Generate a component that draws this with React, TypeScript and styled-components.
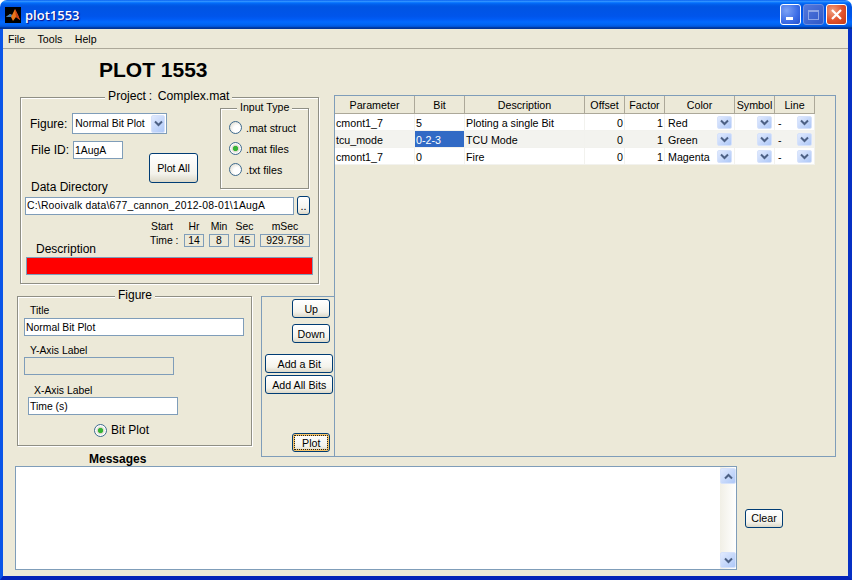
import React from "react";
import styled, { createGlobalStyle } from "styled-components";

const Global = createGlobalStyle`
  html, body { margin: 0; padding: 0; background: #fff; }
  body { font-family: "Liberation Sans", Arial, sans-serif; color: #000; }
  #root { width: 852px; height: 580px; overflow: hidden; }
  * { box-sizing: border-box; }
`;

const Face = "#ece9d8";
const FieldBorder = "#7f9db9";

const Window = styled.div`
  width: 852px;
  height: 580px;
  display: flex;
  flex-direction: column;
  font-size: 10.4px;
`;

const TitleBar = styled.div`
  height: 29px;
  flex: none;
  display: flex;
  align-items: center;
  padding: 0 5px 0 5px;
  border-radius: 7px 7px 0 0;
  background: linear-gradient(180deg, #0058ee 0%, #3593ff 4%, #288eff 6%, #127dff 8%, #036ffc 10%, #0262ee 14%, #0057e5 20%, #0054e3 24%, #0055eb 56%, #005bf5 66%, #026afe 76%, #0062ef 86%, #0052d6 92%, #0040ab 94%, #003092 100%);
`;

const TitleText = styled.span`
  margin-left: 4px;
  color: #fff;
  font-family: "Open Sans", sans-serif;
  font-size: 13px;
  font-weight: 600;
  text-shadow: 1px 1px 1px #0f1089;
`;

const Caption = styled.div`
  margin-left: auto;
  display: flex;
  gap: 2px;
`;

const CaptionButton = styled.div<{ $kind: "min" | "max" | "close" }>`
  width: 21px;
  height: 21px;
  border-radius: 3px;
  border: 1px solid ${(p) => (p.$kind === "max" ? "#6d8fe0" : "#fff")};
  display: flex;
  align-items: center;
  justify-content: center;
  background: ${(p) =>
    p.$kind === "close"
      ? "radial-gradient(circle at 30% 30%, #f0a080, #e0502a 55%, #c23a16)"
      : p.$kind === "max"
      ? "linear-gradient(135deg, #5478dc, #2e58c8)"
      : "radial-gradient(circle at 30% 30%, #7da2f5, #3b6ce6 60%, #2450cc)"};
`;

const Frame = styled.div`
  flex: 1;
  min-height: 0;
  display: flex;
  flex-direction: column;
  background: ${Face};
  border-left: 3px solid #0a55e8;
  border-right: 4px solid #0630c4;
  border-bottom: 4px solid #0323b8;
`;

const MenuBar = styled.div`
  height: 20px;
  flex: none;
  display: flex;
  align-items: center;
  padding-left: 5px;
  gap: 12.5px;
  border-bottom: 1px solid #aca899;
  font-size: 10.6px;
`;

const UpperArea = styled.div`
  display: flex;
  height: 408px;
  flex: none;
`;

const LeftColumn = styled.div`
  width: 331px;
  flex: none;
  display: flex;
  flex-direction: column;
`;

const Heading = styled.h1`
  margin: 0;
  height: 48px;
  padding: 9px 0 0 96px;
  font-size: 21px;
  line-height: 24px;
  font-weight: bold;
`;

const EtchedPanel = styled.div`
  position: relative;
  border: 1px solid #8f8f85;
  box-shadow: 1px 1px 0 #fff, inset 1px 1px 0 #fff;
`;

const Legend = styled.span<{ $left: number }>`
  position: absolute;
  top: -8px;
  left: ${(p) => p.$left}px;
  padding: 0 3px;
  background: ${Face};
  font-size: 12px;
  line-height: 13px;
  white-space: pre;
`;

const ProjectLegend = styled(Legend)`
  font-size: 12.2px;
  word-spacing: -0.6px;
`;

const ProjectPanel = styled(EtchedPanel)`
  margin-left: 17px;
  width: 299px;
  height: 187px;
  padding: 10px 0 0 4px;
  display: flex;
  flex-direction: column;
`;

const TopRow = styled.div`
  display: flex;
  align-items: flex-start;
`;

const TopLeft = styled.div`
  width: 195px;
  padding-left: 5px;
  display: flex;
  flex-direction: column;
`;

const FigureRow = styled.div`
  margin-top: 5px;
  display: flex;
  align-items: center;
  gap: 5px;
  height: 21px;
`;

const BigLabel = styled.span`
  font-size: 12px;
  line-height: 14px;
  white-space: pre;
`;

const Select = styled.div`
  width: 95px;
  height: 21px;
  background: #fff;
  border: 1px solid ${FieldBorder};
  display: flex;
  align-items: center;
  justify-content: space-between;
  padding: 0 1px 0 2px;
  font-size: 10.4px;
`;

const ArrowBox = styled.div<{ $w?: number; $h?: number }>`
  width: ${(p) => p.$w ?? 15}px;
  height: ${(p) => p.$h ?? 13}px;
  flex: none;
  border-radius: 2px;
  border: 1px solid #d6e2fb;
  background: linear-gradient(135deg, #e1eafe, #aec8f7);
  display: flex;
  align-items: center;
  justify-content: center;
`;

const CellArrow = styled(ArrowBox)`
  margin-top: -2px;
`;

const Chevron = ({ up = false }: { up?: boolean }) => (
  <svg width="9" height="7" viewBox="0 0 9 7">
    <polyline
      points={up ? "1,5.5 4.5,2 8,5.5" : "1,1.5 4.5,5 8,1.5"}
      fill="none"
      stroke="#4d6185"
      strokeWidth="2"
    />
  </svg>
);

const FileRow = styled.div`
  margin-top: 7px;
  display: flex;
  align-items: flex-start;
`;

const FileGroup = styled.div`
  display: flex;
  align-items: center;
  gap: 4px;
  margin-left: 1px;
`;

const Field = styled.div<{ $w: number; $h?: number; $disabled?: boolean }>`
  width: ${(p) => p.$w}px;
  height: ${(p) => p.$h ?? 18}px;
  flex: none;
  background: ${(p) => (p.$disabled ? Face : "#fff")};
  border: 1px solid ${FieldBorder};
  display: flex;
  align-items: center;
  padding-left: 1px;
  font-size: 10.4px;
  white-space: pre;
`;

const PathField = styled(Field)`
  letter-spacing: 0.2px;
`;

const Button = styled.div<{ $w: number; $h?: number; $focused?: boolean }>`
  width: ${(p) => p.$w}px;
  height: ${(p) => p.$h ?? 19}px;
  flex: none;
  display: flex;
  align-items: center;
  justify-content: center;
  border: 1px solid #003c74;
  border-radius: 3px;
  background: linear-gradient(180deg, #fff 0%, #f4f3ec 70%, #dcd8c8 100%);
  font-size: 10.7px;
  box-shadow: ${(p) => (p.$focused ? "inset 0 0 0 2px #f5c46a" : "none")};
  outline: ${(p) => (p.$focused ? "1px dotted #222" : "none")};
  outline-offset: ${(p) => (p.$focused ? "-3px" : "0")};
`;

const PlotAllButton = styled(Button)`
  margin: 12px 0 0 26px;
`;

const DataLabel = styled(BigLabel)`
  margin: -3px 0 0 1px;
`;

const InputTypeBox = styled(EtchedPanel)`
  width: 89px;
  height: 81px;
  padding-top: 12px;
  padding-left: 8px;
  display: flex;
  flex-direction: column;
  gap: 8px;
`;

const InputLegend = styled(Legend)`
  font-size: 10.6px;
`;

const RadioRow = styled.div`
  height: 13px;
  display: flex;
  align-items: center;
  gap: 4px;
  font-size: 10.7px;
`;

const RadioCircle = styled.span<{ $on?: boolean }>`
  width: 13px;
  height: 13px;
  flex: none;
  border-radius: 50%;
  border: 1px solid #3e6a8e;
  background: ${(p) =>
    p.$on
      ? "radial-gradient(circle, #36b336 0 2.2px, #dcd9cd 3px, #fff 5px)"
      : "radial-gradient(circle at 65% 65%, #fff 35%, #dcd9cd 90%)"};
`;

const PathRow = styled.div`
  margin-top: 2px;
  display: flex;
  align-items: center;
  gap: 3px;
`;

const InfoRow = styled.div`
  margin: 5px 0 0 11px;
  height: 36px;
  display: flex;
  justify-content: space-between;
  padding-right: 8px;
`;

const DescriptionLabel = styled(BigLabel)`
  align-self: flex-end;
`;

const TimeGrid = styled.div`
  display: grid;
  grid-template-columns: 34px 20px 20px 21px 50px;
  grid-template-rows: 14px 13px;
  column-gap: 5px;
  font-size: 10.4px;
`;

const TimeHead = styled.span`
  text-align: center;
  line-height: 14px;
`;

const TimeCaption = styled.span`
  padding-left: 5px;
  line-height: 13px;
  white-space: pre;
`;

const TimeValue = styled.div`
  border: 1px solid ${FieldBorder};
  text-align: center;
  line-height: 12px;
  font-size: 10.4px;
`;

const RedBar = styled.div`
  margin: 1px 0 0 1px;
  width: 287px;
  height: 18px;
  background: #ff0000;
  border: 1px solid ${FieldBorder};
`;

const LowerLeft = styled.div`
  margin-top: 12px;
  display: flex;
  align-items: flex-start;
`;

const FigurePanel = styled(EtchedPanel)`
  margin-left: 14px;
  width: 236px;
  height: 150px;
  padding: 8px 0 0 6px;
  display: flex;
  flex-direction: column;
`;

const FieldLabel = styled.span<{ $indent: number; $top: number; $bottom?: number }>`
  margin: ${(p) => p.$top}px 0 ${(p) => p.$bottom ?? 0}px ${(p) => p.$indent}px;
  font-size: 10.4px;
  line-height: 12px;
`;

const TitleField = styled(Field)<{ $indent?: number }>`
  margin-left: ${(p) => p.$indent ?? 0}px;
`;

const BitPlotRow = styled.div`
  margin: 8px 0 0 70px;
  display: flex;
  align-items: center;
  gap: 4px;
  font-size: 12px;
`;

const ButtonPanel = styled.div`
  margin-left: 9px;
  width: 73px;
  height: 161px;
  border: 1px solid ${FieldBorder};
  border-right: none;
  padding: 1px 0 0 3px;
  display: flex;
  flex-direction: column;
`;

const SmallButton = styled(Button)<{ $top: number }>`
  margin-top: ${(p) => p.$top}px;
  margin-left: 27px;
`;

const WideButton = styled(Button)<{ $top: number }>`
  margin-top: ${(p) => p.$top}px;
`;

const TablePanel = styled.div`
  margin-top: 46px;
  width: 502px;
  height: 362px;
  border: 1px solid ${FieldBorder};
  background: ${Face};
`;

const Table = styled.div`
  display: grid;
  grid-template-columns: 80px 50px 120px 40px 40px 70px 40px 40px;
  grid-template-rows: 18px;
  grid-auto-rows: 17px;
`;

const HeaderCell = styled.div`
  display: flex;
  align-items: center;
  justify-content: center;
  border-right: 1px solid #aca899;
  border-bottom: 1px solid #aca899;
  font-size: 10.7px;
`;

const Cell = styled.div<{ $shade?: boolean; $selected?: boolean; $kind?: "num" | "drop" | "dash" }>`
  display: flex;
  align-items: center;
  justify-content: ${(p) => (p.$kind === "num" ? "flex-end" : "space-between")};
  padding: 2px ${(p) => (p.$kind === "num" ? 1 : 2)}px 0 ${(p) => (p.$kind === "drop" ? 3 : p.$kind === "dash" ? 3 : 1)}px;
  border-right: 1px solid #f2f2ee;
  border-bottom: 1px solid #f2f2ee;
  background: ${(p) => (p.$selected ? "#316ac5" : p.$shade ? "#f3f3ef" : "#fff")};
  color: ${(p) => (p.$selected ? "#fff" : "#000")};
  font-size: 10.7px;
`;

const SymbolCell = styled(Cell)`
  justify-content: flex-end;
`;

const MessagesArea = styled.div`
  padding-left: 12px;
  display: flex;
  flex-direction: column;
`;

const MessagesLabel = styled.div`
  margin: -5px 0 0 74px;
  font-size: 12px;
  line-height: 14px;
  font-weight: bold;
`;

const MessagesRow = styled.div`
  display: flex;
  align-items: center;
  gap: 8px;
`;

const MessagesBox = styled.div`
  width: 722px;
  height: 104px;
  background: #fff;
  border: 1px solid ${FieldBorder};
  display: flex;
  justify-content: flex-end;
`;

const ScrollTrack = styled.div`
  width: 16px;
  height: 100%;
  padding: 1px 0;
  background: linear-gradient(90deg, #f1efe6, #fff);
  display: flex;
  flex-direction: column;
  justify-content: space-between;
`;

const MatlabIcon = () => (
  <svg width="16" height="16" viewBox="0 0 16 16">
    <rect width="16" height="16" fill="#000" />
    <path d="M1 10 L5 7 L7 8 L10 2 L13 8 L15 13 L11 10 L8 14 L6 10 Z" fill="#e8761a" />
    <path d="M1 10 L5 7 L7 8 L6 10 Z" fill="#3c7fb8" />
    <path d="M10 2 L13 8 L15 13 L11 10 Z" fill="#c8401a" />
  </svg>
);

const headers = ["Parameter", "Bit", "Description", "Offset", "Factor", "Color", "Symbol", "Line"];
const rows = [
  ["cmont1_7", "5", "Ploting a single Bit", "Red"],
  ["tcu_mode", "0-2-3", "TCU Mode", "Green"],
  ["cmont1_7", "0", "Fire", "Magenta"],
];

export default function App() {
  return (
    <Window>
      <Global />
      <TitleBar>
        <MatlabIcon />
        <TitleText>plot1553</TitleText>
        <Caption>
          <CaptionButton $kind="min">
            <svg width="13" height="13" viewBox="0 0 13 13">
              <rect x="2" y="9" width="7" height="3" fill="#fff" />
            </svg>
          </CaptionButton>
          <CaptionButton $kind="max">
            <svg width="13" height="13" viewBox="0 0 13 13">
              <rect x="1.5" y="2.5" width="10" height="9" fill="none" stroke="#8ea6e6" />
              <rect x="1" y="2" width="11" height="2" fill="#8ea6e6" />
            </svg>
          </CaptionButton>
          <CaptionButton $kind="close">
            <svg width="13" height="13" viewBox="0 0 13 13">
              <path d="M2 2 L11 11 M11 2 L2 11" stroke="#fff" strokeWidth="2.2" />
            </svg>
          </CaptionButton>
        </Caption>
      </TitleBar>
      <Frame>
        <MenuBar>
          <span>File</span>
          <span>Tools</span>
          <span>Help</span>
        </MenuBar>
        <UpperArea>
          <LeftColumn>
            <Heading>PLOT 1553</Heading>
            <ProjectPanel>
              <ProjectLegend $left={84}>Project :  Complex.mat</ProjectLegend>
              <TopRow>
                <TopLeft>
                  <FigureRow>
                    <BigLabel>Figure:</BigLabel>
                    <Select>
                      Normal Bit Plot
                      <ArrowBox $w={14} $h={18}>
                        <Chevron />
                      </ArrowBox>
                    </Select>
                  </FigureRow>
                  <FileRow>
                    <FileGroup>
                      <BigLabel>File ID:</BigLabel>
                      <Field $w={50}>1AugA</Field>
                    </FileGroup>
                    <PlotAllButton $w={49} $h={30}>Plot All</PlotAllButton>
                  </FileRow>
                  <DataLabel>Data Directory</DataLabel>
                </TopLeft>
                <InputTypeBox>
                  <InputLegend $left={16}>Input Type</InputLegend>
                  <RadioRow><RadioCircle />.mat struct</RadioRow>
                  <RadioRow><RadioCircle $on />.mat files</RadioRow>
                  <RadioRow><RadioCircle />.txt files</RadioRow>
                </InputTypeBox>
              </TopRow>
              <PathRow>
                <PathField $w={269}>C:\Rooivalk data\677_cannon_2012-08-01\1AugA</PathField>
                <Button $w={13}>..</Button>
              </PathRow>
              <InfoRow>
                <DescriptionLabel>Description</DescriptionLabel>
                <TimeGrid>
                  <TimeHead>Start</TimeHead>
                  <TimeHead>Hr</TimeHead>
                  <TimeHead>Min</TimeHead>
                  <TimeHead>Sec</TimeHead>
                  <TimeHead>mSec</TimeHead>
                  <TimeCaption>Time :</TimeCaption>
                  <TimeValue>14</TimeValue>
                  <TimeValue>8</TimeValue>
                  <TimeValue>45</TimeValue>
                  <TimeValue>929.758</TimeValue>
                </TimeGrid>
              </InfoRow>
              <RedBar />
            </ProjectPanel>
            <LowerLeft>
              <FigurePanel>
                <Legend $left={97}>Figure</Legend>
                <FieldLabel $indent={6} $top={0} $bottom={1}>Title</FieldLabel>
                <TitleField $w={220}>Normal Bit Plot</TitleField>
                <FieldLabel $indent={6} $top={9}>Y-Axis Label</FieldLabel>
                <TitleField $w={150} $disabled />
                <FieldLabel $indent={10} $top={10}>X-Axis Label</FieldLabel>
                <TitleField $w={150} $indent={4}>Time (s)</TitleField>
                <BitPlotRow><RadioCircle $on />Bit Plot</BitPlotRow>
              </FigurePanel>
              <ButtonPanel>
                <SmallButton $w={38} $top={1}>Up</SmallButton>
                <SmallButton $w={38} $top={6}>Down</SmallButton>
                <WideButton $w={68} $top={11}>Add a Bit</WideButton>
                <WideButton $w={68} $top={2}>Add All Bits</WideButton>
                <SmallButton $w={38} $top={39} $focused>Plot</SmallButton>
              </ButtonPanel>
            </LowerLeft>
          </LeftColumn>
          <TablePanel>
            <Table>
              {headers.map((h) => (
                <HeaderCell key={h}>{h}</HeaderCell>
              ))}
              {rows.map((r, i) => (
                <React.Fragment key={i}>
                  <Cell $shade={i === 1}>{r[0]}</Cell>
                  <Cell $shade={i === 1} $selected={i === 1}>{r[1]}</Cell>
                  <Cell $shade={i === 1}>{r[2]}</Cell>
                  <Cell $shade={i === 1} $kind="num">0</Cell>
                  <Cell $shade={i === 1} $kind="num">1</Cell>
                  <Cell $shade={i === 1} $kind="drop">
                    {r[3]}
                    <CellArrow><Chevron /></CellArrow>
                  </Cell>
                  <SymbolCell $shade={i === 1}>
                    <CellArrow><Chevron /></CellArrow>
                  </SymbolCell>
                  <Cell $shade={i === 1} $kind="dash">
                    -
                    <CellArrow><Chevron /></CellArrow>
                  </Cell>
                </React.Fragment>
              ))}
            </Table>
          </TablePanel>
        </UpperArea>
        <MessagesArea>
          <MessagesLabel>Messages</MessagesLabel>
          <MessagesRow>
            <MessagesBox>
              <ScrollTrack>
                <ArrowBox $w={16} $h={16}><Chevron up /></ArrowBox>
                <ArrowBox $w={16} $h={16}><Chevron /></ArrowBox>
              </ScrollTrack>
            </MessagesBox>
            <Button $w={38}>Clear</Button>
          </MessagesRow>
        </MessagesArea>
      </Frame>
    </Window>
  );
}
